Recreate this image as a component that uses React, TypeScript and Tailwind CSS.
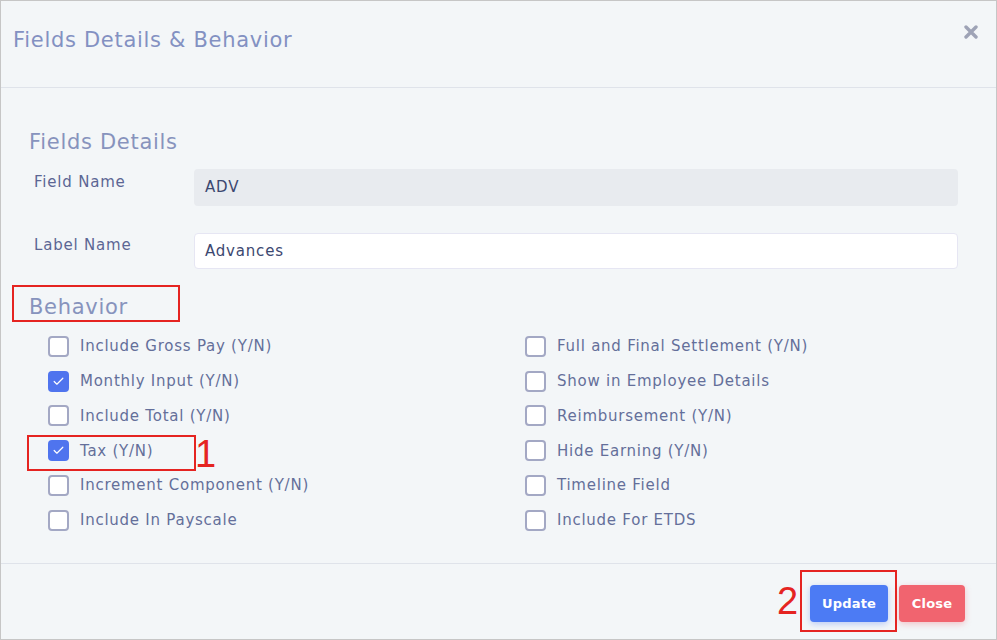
import { Check } from 'lucide-react';

const left = [
  { label: 'Include Gross Pay (Y/N)', checked: false },
  { label: 'Monthly Input (Y/N)', checked: true },
  { label: 'Include Total (Y/N)', checked: false },
  { label: 'Tax (Y/N)', checked: true },
  { label: 'Increment Component (Y/N)', checked: false },
  { label: 'Include In Payscale', checked: false },
];

const right = [
  { label: 'Full and Final Settlement (Y/N)', checked: false },
  { label: 'Show in Employee Details', checked: false },
  { label: 'Reimbursement (Y/N)', checked: false },
  { label: 'Hide Earning (Y/N)', checked: false },
  { label: 'Timeline Field', checked: false },
  { label: 'Include For ETDS', checked: false },
];

function Box({ label, checked }: { label: string; checked: boolean }) {
  return (
    <label className="flex items-center h-[34.8px] gap-[11px]">
      {checked ? (
        <span className="w-[21px] h-[21px] rounded-[4px] bg-[#4f74ee] flex items-center justify-center">
          <Check size={13} strokeWidth={2.2} className="text-white" />
        </span>
      ) : (
        <span className="w-[21px] h-[21px] rounded-[4px] border-2 border-[#a3a8c4] bg-white" />
      )}
      <span className="text-[15px] tracking-[0.75px] text-[#646f9a]">{label}</span>
    </label>
  );
}

export default function App() {
  return (
    <div
      className="relative w-[997px] h-[640px] border border-[#c6c6c6] bg-[#f3f6f8] flex flex-col"
      style={{ fontFamily: '"DejaVu Sans", "Noto Sans", sans-serif' }}
    >
      {/* Header */}
      <div className="h-[87px] shrink-0 border-b border-[#dfe3ea] flex items-center justify-between pl-[12px] pr-[18px] pb-[6px]">
        <h2 className="text-[21px] text-[#8391c2] tracking-[0.7px]">Fields Details &amp; Behavior</h2>
        <svg width="14" height="14" viewBox="0 0 14 14" className="mb-[19px]">
          <path d="M2 2 L12 12 M12 2 L2 12" stroke="#9ea3b6" strokeWidth="3.4" strokeLinecap="round" />
        </svg>
      </div>

      {/* Body */}
      <div className="flex-1 pl-[28px] pr-[38px] pt-[39px]">
        <h3 className="text-[21px] leading-[30px] tracking-[0.7px] text-[#8793bd]">Fields Details</h3>

        <div className="flex mt-[12px]">
          <div className="w-[165px] pl-[5px] pt-[2px] text-[15px] tracking-[0.8px] text-[#5c6694]">Field Name</div>
          <div className="flex-1 h-[37px] rounded-[4px] bg-[#e8ebef] flex items-center px-[11px] text-[15px] tracking-[0.8px] text-[#3c4870]">ADV</div>
        </div>

        <div className="flex mt-[27px]">
          <div className="w-[165px] pl-[5px] pt-[1px] text-[15px] tracking-[0.8px] text-[#5c6694]">Label Name</div>
          <div className="flex-1 h-[36px] rounded-[4px] bg-white border border-[#e6e6f3] flex items-center px-[10px] text-[15px] tracking-[0.8px] text-[#3c4870]">Advances</div>
        </div>

        <h3 className="mt-[23px] text-[21px] leading-[30px] tracking-[0.7px] text-[#8793bd]">Behavior</h3>

        <div className="grid grid-cols-2 pl-[19px] mt-[7px]">
          <div className="flex flex-col">
            {left.map(i => <Box key={i.label} {...i} />)}
          </div>
          <div className="flex flex-col pl-[22px]">
            {right.map(i => <Box key={i.label} {...i} />)}
          </div>
        </div>
      </div>

      {/* Footer */}
      <div className="h-[76px] shrink-0 border-t border-[#dfe3ea] flex items-center justify-end gap-[11px] pr-[31px] pt-[4px]">
        <button className="w-[78px] h-[37px] rounded-[4px] bg-[#4c7bf4] text-white text-[13px] font-bold tracking-[0.2px] shadow-[0_2px_6px_rgba(76,123,244,0.35)]">Update</button>
        <button className="w-[66px] h-[37px] rounded-[4px] bg-[#f1646f] text-white text-[13px] font-bold tracking-[0.2px] shadow-[0_2px_6px_rgba(241,100,111,0.35)]">Close</button>
      </div>

      {/* Annotations */}
      <div className="absolute left-[11px] top-[284px] w-[168px] h-[37px] border-2 border-[#e52421] pointer-events-none" />
      <div className="absolute left-[26px] top-[434px] w-[169px] h-[36px] border-2 border-[#e52421] pointer-events-none" />
      <div className="absolute left-[194px] top-[431px] text-[38px] leading-[44px] text-[#e52421]" style={{ fontFamily: '"Liberation Sans", Arial, sans-serif' }}>1</div>
      <div className="absolute left-[799px] top-[569px] w-[97px] h-[62px] border-2 border-[#e52421] pointer-events-none" />
      <div className="absolute left-[776px] top-[578px] text-[38px] leading-[44px] text-[#e52421]" style={{ fontFamily: '"Liberation Sans", Arial, sans-serif' }}>2</div>
    </div>
  );
}
